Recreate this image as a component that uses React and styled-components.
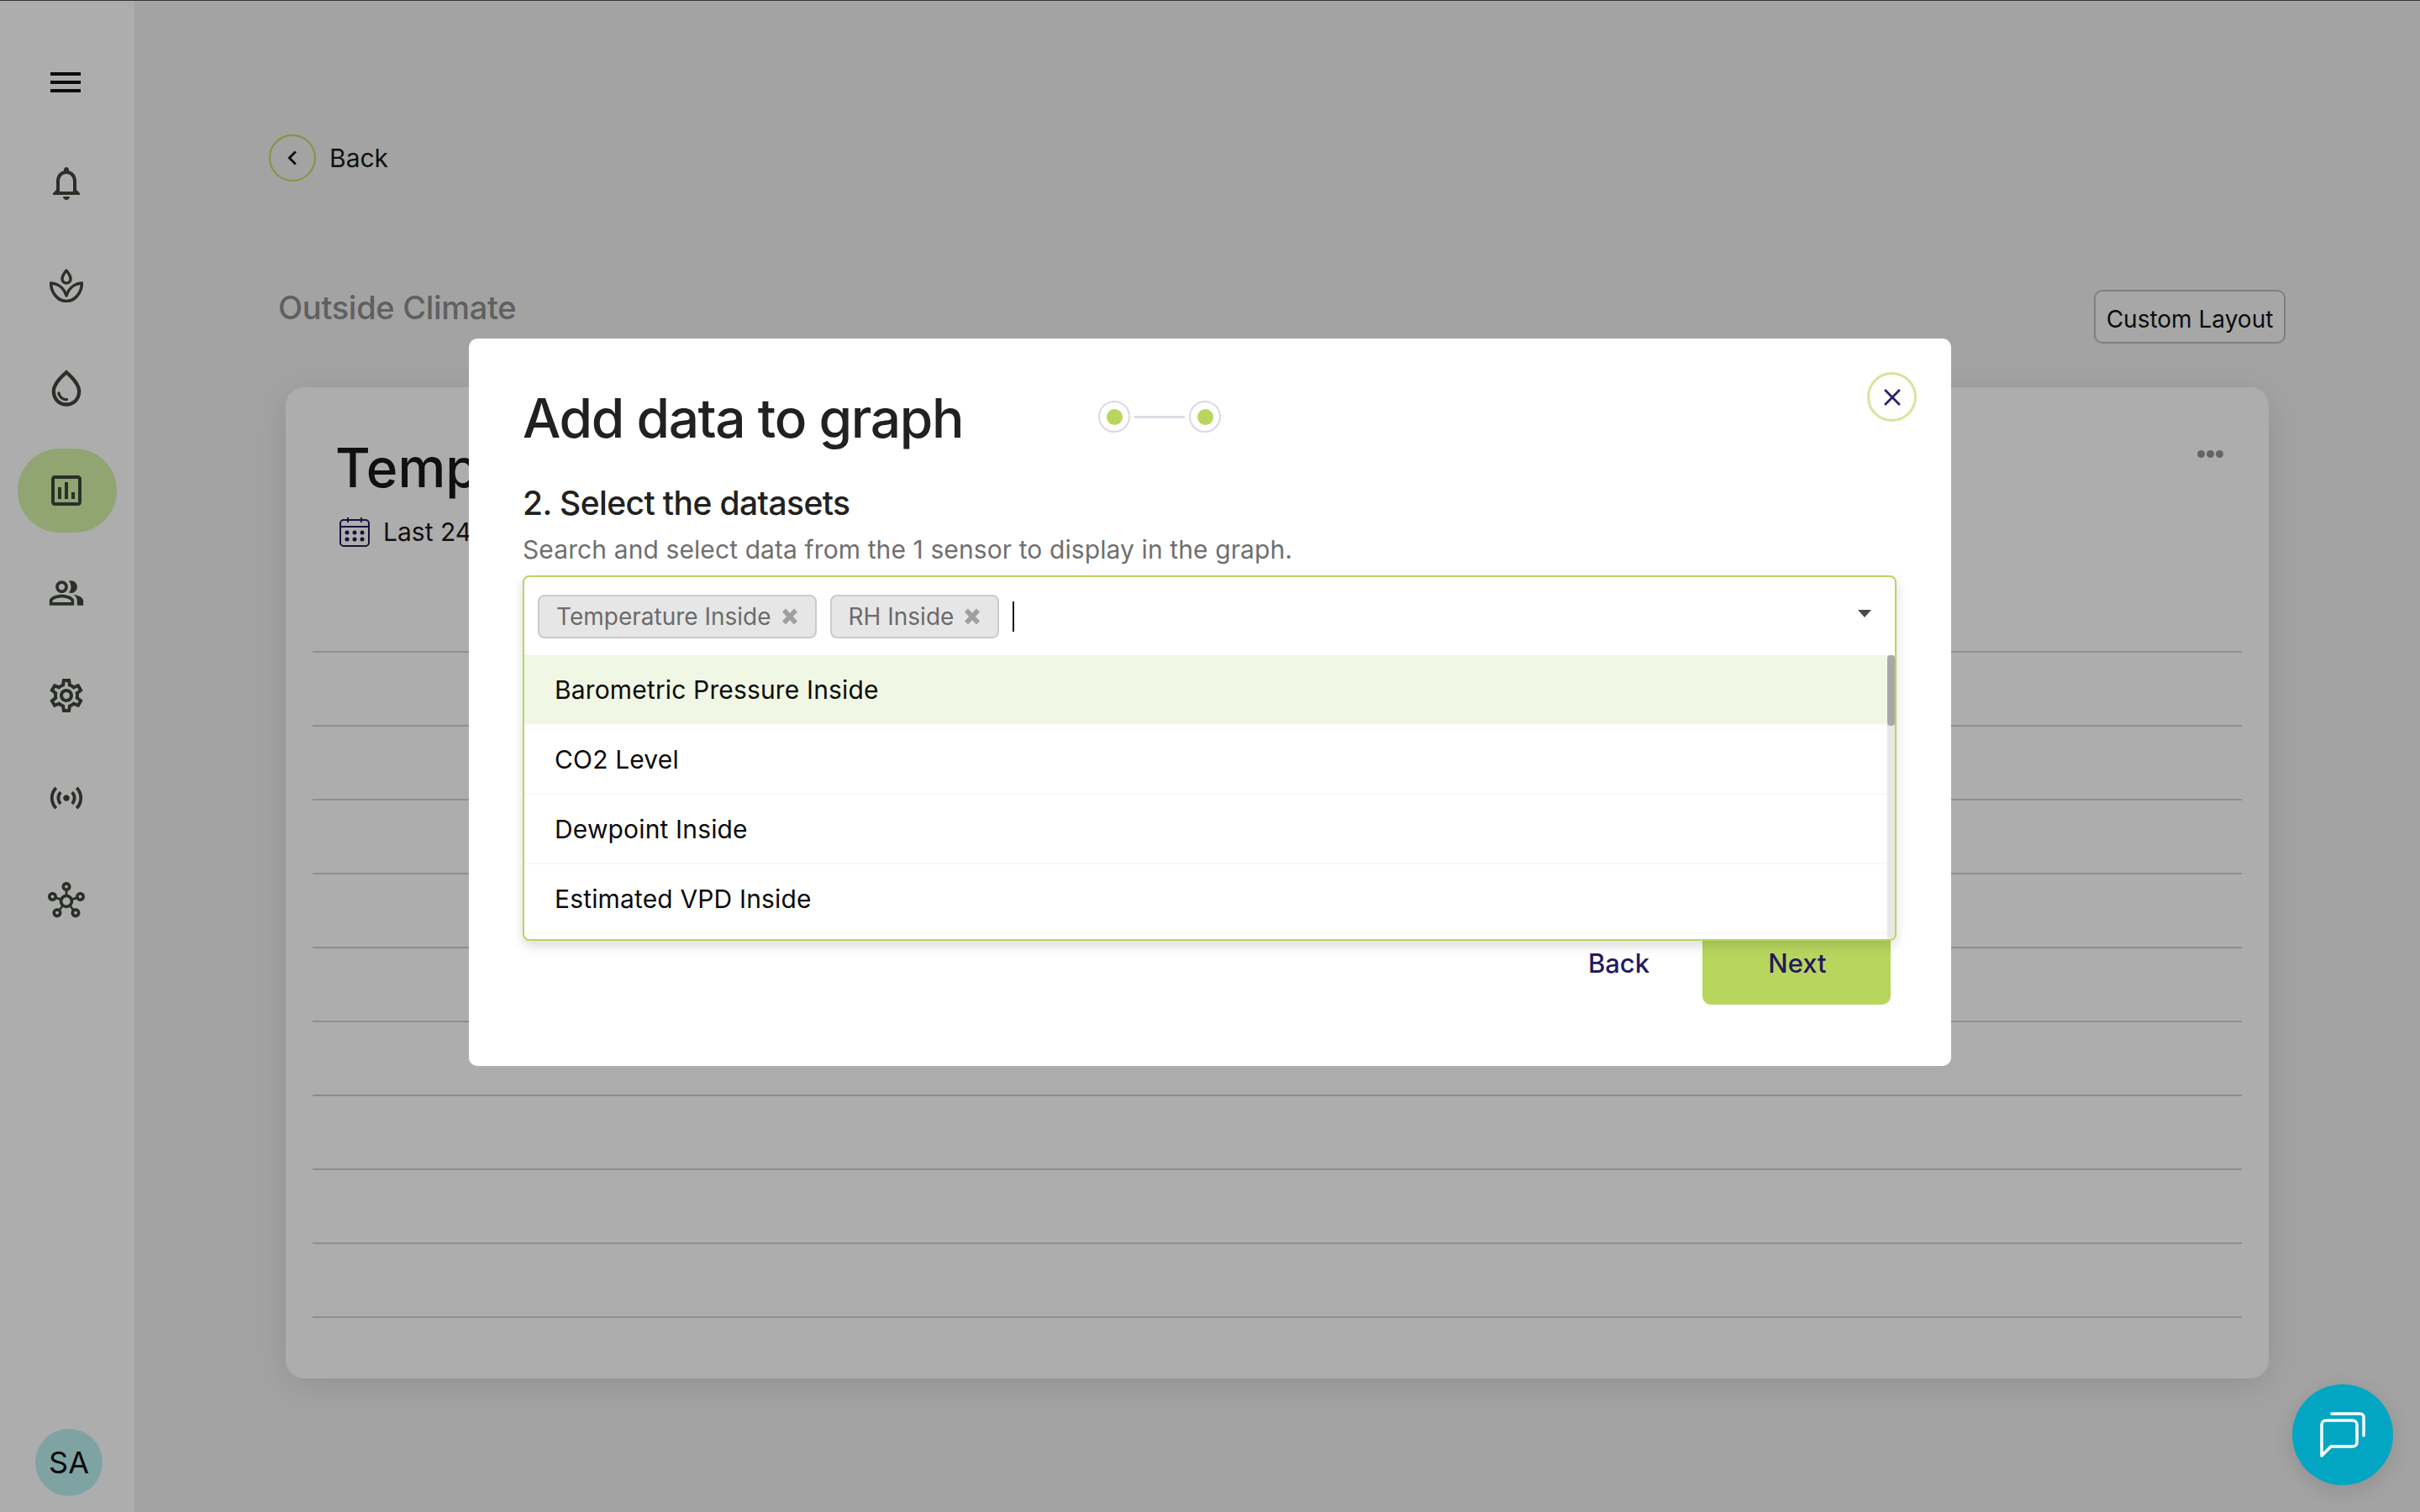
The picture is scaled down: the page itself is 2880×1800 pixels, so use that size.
import React from "react";
import styled, { createGlobalStyle } from "styled-components";
import {
  MdOutlineNotifications,
  MdOutlineWaterDrop,
  MdOutlineAssessment,
  MdOutlinePeopleAlt,
  MdOutlineSettings,
  MdOutlineSensors,
  MdOutlineHub,
  MdChevronLeft,
  MdClose,
} from "react-icons/md";

const GlobalStyle = createGlobalStyle`
  html, body {
    margin: 0;
    padding: 0;
    background: #f0f0f0;
  }
  * {
    box-sizing: border-box;
  }
`;

const Root = styled.div`
  position: relative;
  display: flex;
  width: 2880px;
  height: 1800px;
  overflow: hidden;
  background: #f0f0f0;
  border-top: 1px solid #333;
  font-family: Inter, "Liberation Sans", sans-serif;
`;

/* sidebar */
const Sidebar = styled.nav`
  flex: 0 0 160px;
  display: flex;
  flex-direction: column;
  align-items: center;
  background: #fff;
  padding: 47px 0 19px;
`;

const MenuButton = styled.div`
  display: flex;
  flex-direction: column;
  align-items: center;
  justify-content: center;
  gap: 6px;
  width: 36px;
  height: 100px;
  margin-bottom: 20px;
  margin-left: -4px;

  span {
    display: block;
    width: 36px;
    height: 4px;
    background: #121212;
  }
`;

const NavList = styled.div`
  display: flex;
  flex-direction: column;
  gap: 22px;
`;

const NavItem = styled.div`
  display: flex;
  align-items: center;
  justify-content: center;
  width: 118px;
  height: 100px;
  padding-right: 2px;
  border-radius: 50px;
  color: #3f473b;
  background: ${(p) => (p.$active ? "#d4f4a8" : "transparent")};
  font-size: ${(p) => p.$size || 48}px;
`;

const Avatar = styled.div`
  display: flex;
  align-items: center;
  justify-content: center;
  width: 80px;
  height: 80px;
  margin-top: auto;
  margin-left: 4px;
  border-radius: 50%;
  background: #bbf0f0;
  color: #121212;
  font-size: 36px;
`;

/* page behind the modal */
const Main = styled.main`
  flex: 1;
  padding: 159px 180px 0;
`;

const BackRow = styled.div`
  display: flex;
  align-items: center;
  gap: 16px;
  margin-left: -20px;
  height: 55px;
  color: #191919;
  font-size: 30px;
`;

const BackCircle = styled.div`
  display: flex;
  align-items: center;
  justify-content: center;
  width: 56px;
  height: 56px;
  border-radius: 50%;
  border: 2px solid #c0dc5c;
  font-size: 34px;
`;

const HeaderRow = styled.div`
  display: flex;
  align-items: flex-start;
  justify-content: space-between;
  margin: 130px -20px 0 -9px;
`;

const SectionTitle = styled.h2`
  margin: -2px 0 0;
  color: #8e8e8e;
  font-size: 38px;
  line-height: 46px;
  font-weight: 500;
  letter-spacing: -0.3px;
`;

const LayoutButton = styled.div`
  display: flex;
  align-items: center;
  justify-content: center;
  width: 228px;
  height: 64px;
  padding-top: 5px;
  border: 2px solid #bcbcbc;
  border-radius: 10px;
  background: #f7f7f7;
  color: #121212;
  font-size: 28px;
`;

const Card = styled.section`
  position: relative;
  height: 1180px;
  margin-top: 52px;
  padding: 58px 32px 0 59px;
  background: #fff;
  border-radius: 22px;
  box-shadow: 0 8px 40px rgba(0, 0, 0, 0.1);
`;

const CardTitle = styled.h1`
  margin: 0;
  color: #191919;
  font-size: 64px;
  line-height: 76px;
  font-weight: 500;
`;

const RangeRow = styled.div`
  display: flex;
  align-items: center;
  gap: 16px;
  margin: 20px 0 0 5px;
  color: #191919;
  font-size: 30px;
`;

const MoreDots = styled.div`
  position: absolute;
  top: 75px;
  right: 54px;
  display: flex;
  gap: 2px;

  span {
    width: 9px;
    height: 9px;
    border-radius: 50%;
    background: #969696;
  }
`;

const GridLines = styled.div`
  display: flex;
  flex-direction: column;
  gap: 86px;
  margin: 124px 0 0 -27px;
`;

const GridLine = styled.div`
  height: 2px;
  background: #d2d2d2;
`;

/* modal */
const Backdrop = styled.div`
  position: absolute;
  inset: 0;
  display: flex;
  justify-content: center;
  align-items: flex-start;
  padding-top: 402px;
  background: rgba(0, 0, 0, 0.32);
`;

const Modal = styled.div`
  position: relative;
  width: 1764px;
  height: 866px;
  padding: 53px 72px 72px 64px;
  background: #fff;
  border-radius: 10px;
`;

const CloseButton = styled.div`
  position: absolute;
  top: 40px;
  right: 41px;
  display: flex;
  align-items: center;
  justify-content: center;
  width: 59px;
  height: 59px;
  border-radius: 50%;
  border: 3px solid #d3e69c;
  color: #2a2466;
  font-size: 34px;
`;

const TitleRow = styled.div`
  display: flex;
  align-items: center;
`;

const ModalTitle = styled.h1`
  flex: 0 0 685px;
  margin: 0;
  color: #212121;
  font-size: 64px;
  line-height: 84px;
  font-weight: 500;
  letter-spacing: -1.4px;
`;

const Stepper = styled.div`
  display: flex;
  align-items: center;
  gap: 5px;
  margin-top: -4px;
`;

const StepDot = styled.div`
  display: flex;
  align-items: center;
  justify-content: center;
  width: 38px;
  height: 38px;
  border-radius: 50%;
  border: 2px solid #d9d9e3;

  &::after {
    content: "";
    width: 19px;
    height: 19px;
    border-radius: 50%;
    background: #b8d65e;
  }
`;

const StepLine = styled.div`
  width: 60px;
  height: 3px;
  background: #dcdce6;
`;

const StepTitle = styled.h2`
  margin: 34px 0 0;
  color: #212121;
  font-size: 39px;
  line-height: 50px;
  font-weight: 450;
  letter-spacing: -0.6px;
`;

const Helper = styled.p`
  margin: 10px 0 0;
  color: #6f6f6f;
  font-size: 30px;
  line-height: 40px;
  letter-spacing: 0.1px;
`;

const SelectSlot = styled.div`
  position: relative;
  height: 411px;
  margin: 11px -7px 0 0;
`;

const SelectPanel = styled.div`
  position: absolute;
  top: 0;
  left: 0;
  right: 0;
  z-index: 2;
  height: 435px;
  background: #fff;
  border: 2px solid #b8d65e;
  border-radius: 8px;
  box-shadow: 0 6px 14px rgba(0, 0, 0, 0.14);
  overflow: hidden;
`;

const Control = styled.div`
  display: flex;
  align-items: center;
  gap: 16px;
  height: 93px;
  padding: 0 20px 0 16px;
`;

const Chip = styled.div`
  display: flex;
  align-items: center;
  gap: 12px;
  height: 52px;
  padding: 0 20px;
  background: #e6e6e6;
  border: 2px solid #cbcbcb;
  border-radius: 8px;
  color: #6b6b6b;
  font-size: 28px;
`;

const Caret = styled.div`
  width: 0;
  height: 0;
  margin-left: auto;
  margin-top: -6px;
  margin-right: 8px;
  border-left: 8px solid transparent;
  border-right: 8px solid transparent;
  border-top: 9px solid #4a4a4a;
`;

const TextCursor = styled.div`
  width: 2px;
  height: 36px;
  background: #111;
`;

const OptionList = styled.div`
  position: relative;
  padding-right: 9px;
`;

const Option = styled.div`
  display: flex;
  align-items: center;
  height: 83px;
  padding-left: 36px;
  background: ${(p) => (p.$active ? "#f0f7e4" : "#fff")};
  border-bottom: 2px solid #f8f8f8;
  color: #0c0c0c;
  font-size: 30px;
  letter-spacing: 0.15px;
`;

const ScrollTrack = styled.div`
  position: absolute;
  top: 0;
  bottom: -10px;
  right: 0;
  width: 9px;
  background: #e8e8e8;

  &::before {
    content: "";
    display: block;
    height: 84px;
    background: #a8a8a8;
    border-radius: 4px;
  }
`;

const Footer = styled.div`
  display: flex;
  justify-content: flex-end;
`;

const TextButton = styled.div`
  display: flex;
  align-items: center;
  justify-content: center;
  width: 199px;
  height: 100px;
  color: #251a5e;
  font-size: 31px;
  font-weight: 450;
`;

const NextButton = styled(TextButton)`
  width: 224px;
  padding-left: 2px;
  background: #b8d65e;
  border-radius: 10px;
`;

const ChatButton = styled.div`
  position: absolute;
  right: 32px;
  bottom: 32px;
  z-index: 3;
  display: flex;
  align-items: center;
  justify-content: center;
  width: 120px;
  height: 120px;
  border-radius: 50%;
  background: #02a6c2;
  box-shadow: 0 6px 24px rgba(0, 0, 0, 0.12);
`;

const LotusIcon = () => (
  <svg width="40" height="40" viewBox="0 0 40 40" fill="none" stroke="currentColor" strokeWidth="3.500" strokeLinejoin="round">
    <path d="M20 2C17.500 5 15 8.500 15 12a5 5 0 0 0 10 0C25 8.500 22.500 5 20 2Z" />
    <path d="M1.500 17C9.500 17.500 17 22.500 20 32C23 22.500 30.500 17.500 38.500 17C38 29 30 38.500 20 38.500C10 38.500 2 29 1.500 17Z" />
  </svg>
);

const CalendarIcon = () => (
  <svg width="36" height="36" viewBox="0 0 36 36" fill="none" stroke="#201d58" strokeWidth="2">
    <rect x="1" y="4" width="34" height="31" rx="4" />
    <path d="M1 12H35M10 1V7M26 1V7" />
    <g fill="#201d58" stroke="none">
      <circle cx="9" cy="19" r="2.500" />
      <circle cx="18" cy="19" r="2.500" />
      <circle cx="27" cy="19" r="2.500" />
      <circle cx="9" cy="27" r="2.500" />
      <circle cx="18" cy="27" r="2.500" />
      <circle cx="27" cy="27" r="2.500" />
    </g>
  </svg>
);

const ChipCross = () => (
  <svg width="20" height="20" viewBox="0 0 20 20" fill="none" stroke="#a0a0a0" strokeWidth="5.500">
    <path d="M3 2.500L17 17.500M17 2.500L3 17.500" />
  </svg>
);

const ChatIcon = () => (
  <svg width="54" height="54" viewBox="0 0 54 54" fill="none" stroke="#fff" strokeWidth="3.500" strokeLinecap="round" strokeLinejoin="round">
    <path d="M2 52V15a5 5 0 0 1 5-5h32a5 5 0 0 1 5 5v21a5 5 0 0 1-5 5H13Z" />
    <path d="M14 2H48a4 4 0 0 1 4 4V28" />
  </svg>
);

const options = ["Barometric Pressure Inside", "CO2 Level", "Dewpoint Inside", "Estimated VPD Inside"];

const lines = Array.from({ length: 10 }, (_, i) => i);

export default function App() {
  return (
    <Root>
      <GlobalStyle />
      <Sidebar>
        <MenuButton>
          <span />
          <span />
          <span />
        </MenuButton>
        <NavList>
          <NavItem><MdOutlineNotifications /></NavItem>
          <NavItem><LotusIcon /></NavItem>
          <NavItem $size={52}><MdOutlineWaterDrop /></NavItem>
          <NavItem $active><MdOutlineAssessment /></NavItem>
          <NavItem $size={44}><MdOutlinePeopleAlt /></NavItem>
          <NavItem><MdOutlineSettings /></NavItem>
          <NavItem $size={46}><MdOutlineSensors /></NavItem>
          <NavItem $size={44}><MdOutlineHub /></NavItem>
        </NavList>
        <Avatar>SA</Avatar>
      </Sidebar>

      <Main>
        <BackRow>
          <BackCircle><MdChevronLeft /></BackCircle>
          Back
        </BackRow>
        <HeaderRow>
          <SectionTitle>Outside Climate</SectionTitle>
          <LayoutButton>Custom Layout</LayoutButton>
        </HeaderRow>
        <Card>
          <CardTitle>Temp</CardTitle>
          <RangeRow>
            <CalendarIcon />
            Last 24
          </RangeRow>
          <MoreDots>
            <span />
            <span />
            <span />
          </MoreDots>
          <GridLines>
            {lines.map((i) => (
              <GridLine key={i} />
            ))}
          </GridLines>
        </Card>
      </Main>

      <Backdrop>
        <Modal>
          <CloseButton><MdClose /></CloseButton>
          <TitleRow>
            <ModalTitle>Add data to graph</ModalTitle>
            <Stepper>
              <StepDot />
              <StepLine />
              <StepDot />
            </Stepper>
          </TitleRow>
          <StepTitle>2. Select the datasets</StepTitle>
          <Helper>Search and select data from the 1 sensor to display in the graph.</Helper>
          <SelectSlot>
            <SelectPanel>
              <Control>
                <Chip>Temperature Inside <ChipCross /></Chip>
                <Chip>RH Inside <ChipCross /></Chip>
                <TextCursor />
                <Caret />
              </Control>
              <OptionList>
                {options.map((o, i) => (
                  <Option key={o} $active={i === 0}>{o}</Option>
                ))}
                <ScrollTrack />
              </OptionList>
            </SelectPanel>
          </SelectSlot>
          <Footer>
            <TextButton>Back</TextButton>
            <NextButton>Next</NextButton>
          </Footer>
        </Modal>
      </Backdrop>

      <ChatButton><ChatIcon /></ChatButton>
    </Root>
  );
}
